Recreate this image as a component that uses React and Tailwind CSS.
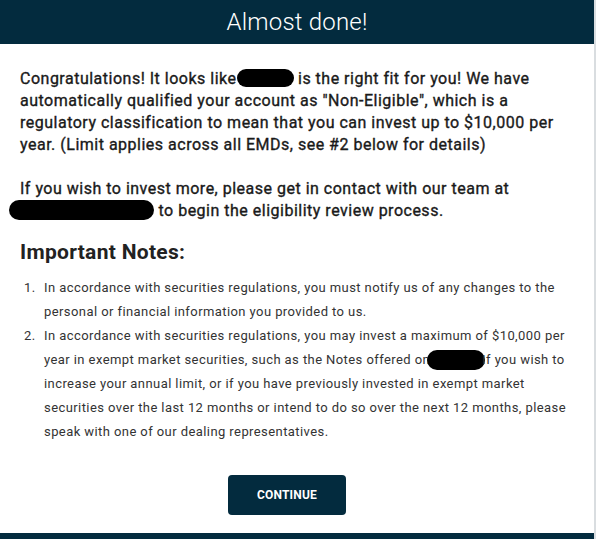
import React from "react";

const Redact = ({ className }) => (
    <span className={`inline-block align-middle bg-black rounded-full ${className}`} />
);

export default function App() {
    return (
        <div className="w-[596px] h-[539px] bg-[#d9dde0] font-['Roboto',sans-serif] overflow-hidden">
            <div className="w-[594px] h-[539px] bg-white flex flex-col rounded-tr-[3px]">
                <div className="h-[44px] bg-[#032b3e] flex items-center justify-center">
                    <h1 className="text-white text-[24px] font-light tracking-[0.2px]">Almost done!</h1>
                </div>

                <div className="px-[20px] pt-[24px] text-[#1a1a1a] text-[16px] leading-[22px] tracking-[0.5px] font-normal [-webkit-text-stroke:0.35px_#1a1a1a]">
                    <p>
                        <span className="block whitespace-nowrap">
                            Congratulations! It looks like<Redact className="w-[57px] h-[18px] -mt-[3px]" /> is the right fit for you! We have
                        </span>
                        <span className="block whitespace-nowrap">automatically qualified your account as "Non-Eligible", which is a</span>
                        <span className="block whitespace-nowrap">regulatory classification to mean that you can invest up to $10,000 per</span>
                        <span className="block whitespace-nowrap">year. (Limit applies across all EMDs, see #2 below for details)</span>
                    </p>
                    <p className="mt-[22px]">
                        <span className="block whitespace-nowrap">If you wish to invest more, please get in contact with our team at</span>
                        <span className="block whitespace-nowrap -ml-[11px]">
                            <Redact className="w-[145px] h-[20px] -mt-[3px]" /> to begin the eligibility review process.
                        </span>
                    </p>
                </div>

                <div className="px-[20px] pt-[16px]">
                    <h2 className="text-[21px] leading-[28px] font-bold text-[#222] tracking-[0.3px]">Important Notes:</h2>
                    <ol className="mt-[10px] text-[13px] leading-[24px] text-[#333] tracking-[0.42px]">
                        <li className="flex">
                            <span className="w-[24px] pl-[4px] shrink-0">1.</span>
                            <span>
                                <span className="block whitespace-nowrap">In accordance with securities regulations, you must notify us of any changes to the</span>
                                <span className="block whitespace-nowrap">personal or financial information you provided to us.</span>
                            </span>
                        </li>
                        <li className="flex">
                            <span className="w-[24px] pl-[4px] shrink-0">2.</span>
                            <span>
                                <span className="block whitespace-nowrap">In accordance with securities regulations, you may invest a maximum of $10,000 per</span>
                                <span className="block whitespace-nowrap">
                                    year in exempt market securities, such as the Notes offered on<Redact className="w-[58px] h-[20px] -ml-[3px] -mr-[3px] -mt-[2px]" />If you wish to
                                </span>
                                <span className="block whitespace-nowrap">increase your annual limit, or if you have previously invested in exempt market</span>
                                <span className="block whitespace-nowrap">securities over the last 12 months or intend to do so over the next 12 months, please</span>
                                <span className="block whitespace-nowrap">speak with one of our dealing representatives.</span>
                            </span>
                        </li>
                    </ol>
                </div>

                <div className="flex mt-[31px] pl-[228px]">
                    <button className="w-[118px] h-[40px] bg-[#032b3e] text-white text-[12px] font-bold tracking-[0.2px] rounded-[4px]">
                        CONTINUE
                    </button>
                </div>

                <div className="mt-auto h-[6px] bg-[#032b3e]" />
            </div>
        </div>
    );
}
